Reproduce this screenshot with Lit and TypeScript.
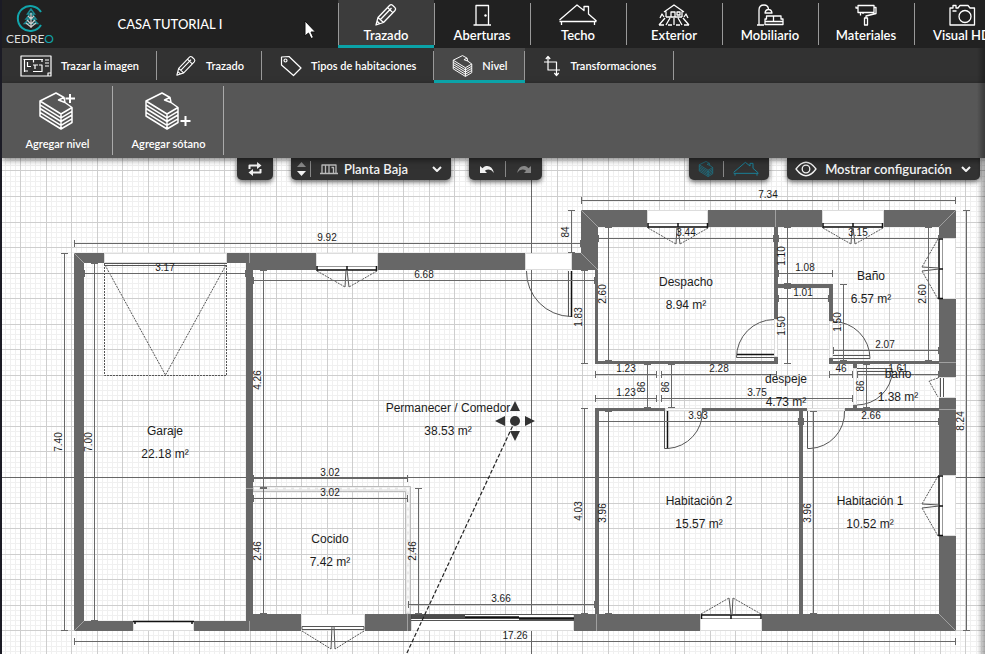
import { LitElement, html, svg, css, type TemplateResult } from "lit";
import { customElement } from "lit/decorators.js";
import { classMap } from "lit/directives/class-map.js";

type Glyph = { w: number; h: number; body: TemplateResult };

const pencil = svg`<path d="M2 22 4 14.500 15.500 2.500Q17 1 18.500 2.200L21 4.600Q22.300 6 21 7.500L9.500 19.500ZM4 14.500 9.500 19.500M6.500 16.500 17.500 5M13.500 4.500 18.800 9.600M2 22 3.200 18.200 5.800 20.700Z"/>`;
const slabs = svg`<path d="M1 9 17 1 25 5.500 19.500 8 26 10.500 33 15.500 22 22ZM25 5.500 26 10.500M1 9V24L22 37 33 30.500V15.500M22 22V37M1 12.800 22 25.800 33 19.300M1 16.500 22 29.500 33 23M1 20.300 22 33.300 33 26.800"/>`;

const glyphs: Record<string, Glyph> = {
  pencil: { w: 24, h: 24, body: pencil },
  door: { w: 24, h: 24, body: svg`<path d="M6 22V2.500H18.500V22M3.500 22H21"/><circle class="solid" cx="15.500" cy="12.500" r="1.200"/>` },
  house: { w: 40, h: 24, body: svg`<path d="M3.500 22V18.500M36.500 22V18.500M1.500 17 19 2 26 7.500V3.500H30.500V11L38.500 18M1.500 18.500H38.500"/>` },
  garden: {
    w: 32, h: 24,
    body: svg`<path d="M6 9 16 2 26 9M8 8.500V14M24 8.500V14M8 14H24M13 14V9H17V14M19 9H22V12H19ZM1 22 7 15M8 22 12 15M16 22V15M24 22 20 15M31 22 25 15M1 22H6M10 22H14M18 22H22M26 22H31M2 15 4 11 6 14M30 15 28 11 26 14"/>`,
  },
  sofa: {
    w: 28, h: 24,
    body: svg`<path d="M1 22H8M3 22V7Q3 2 8 2 12 2 12.500 6M9 10Q9.500 6.500 12.500 6.500 15.500 6.500 16 10ZM9 21.500V16H10.500V13H25V16H27V21.500ZM9 18.500H27M17.500 13V18.500"/>`,
  },
  roller: {
    w: 24, h: 24,
    body: svg`<path d="M4 2.500H20V9.500H4ZM4 5H2V3.500M20 4.500H22V10.500L12 13V15M10.500 15H13.500V22H10.500ZM6.500 9.500V12.500M9 9.500V11"/>`,
  },
  camera: {
    w: 28, h: 24,
    body: svg`<path d="M2 5H5V2.500H8V5H10L12 2.500H20L22 5H26.500V22H2ZM4.500 8H8.500"/><circle cx="17" cy="13.500" r="6"/>`,
  },
  blueprint: {
    w: 32, h: 22,
    body: svg`<path d="M1 1H31V21H1ZM3.500 4.500H23M4.500 4.500V17M4.500 16H8M7.500 7V11.500H11M13.500 7.500V4.500M13 10H18M15 10V14M13 16.500H22V10H19M22 4.500V7M25 5H29M25 8H29M25 11H29M28 21V18H31"/>`,
  },
  tag: { w: 22, h: 22, body: svg`<path d="M1.500 2 9 1.500 21 13 13.500 20.500 1.500 10Z"/><circle cx="5.500" cy="5.500" r="1.500"/>` },
  slabs: { w: 34, h: 38, body: slabs },
  transform: {
    w: 18, h: 22,
    body: svg`<path d="M5 2V15H17M1 7H13.500V20M2.800 4 5 1.500 7.200 4M11.300 18 13.500 20.500 15.700 18"/>`,
  },
  slabUp: { w: 40, h: 40, body: svg`<g transform="translate(1 1)">${slabs}</g><path class="plus" d="M32 3V12M27.500 7.500H37"/>` },
  slabDown: { w: 50, h: 40, body: svg`<g transform="translate(1 1)">${slabs}</g><path class="plus" d="M41.500 25V35M36.500 30H46.500"/>` },
  swap: {
    w: 14, h: 14,
    body: svg`<path class="heavy" d="M1.500 7V3.500H10M12.500 7V10.500H4"/><path class="solid" d="M9 0 13.500 3.500 9 7ZM5 7 .5 10.500 5 14Z"/>`,
  },
  plan: { w: 18, h: 12, body: svg`<path d="M2 10V2H16V10M0 10.500H18M5.500 2V10M9 2V10M11.500 4.500H13.500V10"/>` },
  chevron: { w: 12, h: 8, body: svg`<path class="heavy" d="M2 2 6 6 10 2"/>` },
  undo: { w: 16, h: 12, body: svg`<path class="solid" d="M1 3V10H8L5.800 7.800Q11 4.500 15 10 13 2 7 3 5 3.500 3.500 5.200Z"/>` },
  redo: { w: 16, h: 12, body: svg`<path class="solid" d="M15 3V10H8L10.200 7.800Q5 4.500 1 10 3 2 9 3 11 3.500 12.500 5.200Z"/>` },
  eye: { w: 22, h: 16, body: svg`<path d="M1 8Q11-5.500 21 8 11 21.500 1 8Z"/><circle cx="11" cy="8" r="3.800"/>` },
};

const icon = (name: string, w = glyphs[name].w, h = glyphs[name].h) => html`<svg
  class="icon" width=${w} height=${h} viewBox="0 0 ${glyphs[name].w} ${glyphs[name].h}" aria-hidden="true">${glyphs[name].body}</svg>`;

const sharedStyles = css`
  :host { display: block; font-family: Lato, "Open Sans", sans-serif; color: #fff; }
  * { box-sizing: border-box; }
  button { font: inherit; color: inherit; background: none; border: 0; padding: 0; margin: 0; cursor: pointer; }
  svg { display: block; flex: none; }
  .icon { fill: none; stroke: currentColor; stroke-width: 1.300; stroke-linejoin: round; }
  .heavy { stroke-width: 2; }
  .plus { stroke-width: 2; }
  .solid { fill: currentColor; stroke: none; }
`;

@customElement("main-header")
class MainHeader extends LitElement {
  static styles = [
    sharedStyles,
    css`
      header { display: flex; height: 48px; background: #212121; overflow: hidden; }
      .brand { flex: 0 0 336px; display: grid; grid-template-columns: 56px 1fr 56px; align-items: center; }
      .logo { width: 56px; height: 48px; }
      .ring { fill: none; stroke: #12a5ab; stroke-width: 2; }
      .leaf { fill: none; stroke: #1c8a93; stroke-width: 1.500; }
      .trunk { fill: none; stroke: #ccc; stroke-width: 1.200; }
      .name { fill: #ddd; font: 12px Lato, sans-serif; }
      .accent { fill: #12a5ab; }
      h1 { margin: 0; font-size: 13px; font-weight: 500; text-align: center; }
      nav { display: flex; }
      .tab {
        position: relative; flex: 0 0 96px; height: 48px; padding-top: 3px;
        display: flex; flex-direction: column; align-items: center;
        font-size: 13px; line-height: 16px; font-weight: 600; white-space: nowrap;
      }
      .tab::before { content: ""; position: absolute; left: 0; top: 3px; bottom: 3px; width: 1px; background: #999; }
      .active { background: #3c3c3c; border-bottom: 3px solid #0ba3a8; }
      .active::before { bottom: 0; }
    `,
  ];
  tabs: [string, string][] = [
    ["Trazado", "pencil"], ["Aberturas", "door"], ["Techo", "house"], ["Exterior", "garden"],
    ["Mobiliario", "sofa"], ["Materiales", "roller"], ["Visual HD", "camera"],
  ];
  render() {
    return html`<header>
      <div class="brand">
        <svg class="logo" viewBox="2 0 56 48" role="img" aria-label="Cedreo">
          <path class="ring" d="M41 12A12.500 12.500 0 1 0 41 25"/>
          <path class="leaf" d="M31 9 27.500 14H34.500ZM31 13 26 19H36ZM31 17 24.500 23.500H37.500Z"/>
          <path class="trunk" d="M31 13V28M31 19 28 16M31 19 34 16M31 24 27 20M31 24 35 20M31 27 26 23M31 27 36 23"/>
          <text class="name" x="6" y="43">CEDRE<tspan class="accent">O</tspan></text>
        </svg>
        <h1>CASA TUTORIAL I</h1>
      </div>
      <nav>
        ${this.tabs.map(([label, name], i) => html`<button class=${classMap({ tab: true, active: i === 0 })}>${icon(name)}<span>${label}</span></button>`)}
      </nav>
    </header>`;
  }
}

@customElement("tool-ribbon")
class ToolRibbon extends LitElement {
  static styles = [
    sharedStyles,
    css`
      .sub { display: flex; height: 35px; background: #323232; }
      .item {
        position: relative; display: flex; align-items: center; gap: 9px; padding: 0 18px;
        height: 35px; font-size: 11px; font-weight: 600; white-space: nowrap;
      }
      .item::after { content: ""; position: absolute; right: 0; top: 3px; bottom: 3px; width: 1px; background: #999; }
      .item .icon { stroke-width: 1.200; }
      .active { background: #484848; border-bottom: 3px solid #0ba3a8; padding-top: 3px; }
      .active::after { bottom: 0; }
      .active .icon { stroke-width: 1.700; }
      .panel { display: flex; height: 75px; background: #575757; box-shadow: 0 2px 6px rgba(0, 0, 0, .5); }
      .action {
        position: relative; width: 111px; height: 75px; padding-top: 8px;
        display: flex; flex-direction: column; align-items: center; gap: 5px;
        font-size: 11px; line-height: 16px; font-weight: 600;
      }
      .action .icon { stroke-width: 1.500; }
      .action::after { content: ""; position: absolute; right: 0; top: 3px; bottom: 3px; width: 1px; background: #aaa; }
    `,
  ];
  items: [string, string, number, number][] = [
    ["Trazar la imagen", "blueprint", 32, 22], ["Trazado", "pencil", 22, 22],
    ["Tipos de habitaciones", "tag", 22, 22], ["Nivel", "slabs", 21, 22], ["Transformaciones", "transform", 18, 22],
  ];
  render() {
    return html`<div class="sub">
        ${this.items.map(([label, name, w, h]) => html`<button class=${classMap({ item: true, active: label === "Nivel" })}>
          ${icon(name, w, h)}<span>${label}</span></button>`)}
      </div>
      <div class="panel">
        <button class="action">${icon("slabUp")}<span>Agregar nivel</span></button>
        <button class="action">${icon("slabDown")}<span>Agregar sótano</span></button>
      </div>`;
  }
}

@customElement("canvas-bar")
class CanvasBar extends LitElement {
  static styles = [
    sharedStyles,
    css`
      .bar { display: flex; justify-content: space-between; padding: 0 5px 0 235px; }
      .group { display: flex; gap: 18px; }
      .pill {
        display: flex; align-items: center; height: 22px; background: #323232; color: #f2f2f2;
        border-radius: 0 0 5px 5px; box-shadow: 0 2px 5px rgba(0, 0, 0, .6);
        font-size: 13px; font-weight: 600; white-space: nowrap;
      }
      .swap { width: 36px; justify-content: center; }
      .sep { width: 1px; height: 16px; background: #888; }
      .level { width: 160px; padding: 0 8px 0 6px; gap: 4px; }
      .level .plan { padding: 0 2px 0 5px; color: #bbb; }
      .stepper { display: flex; flex-direction: column; gap: 4px; }
      .stepper button { display: block; }
      .dim { color: #888; }
      .pick { position: relative; flex: 1; display: flex; align-items: center; }
      select {
        appearance: none; width: 100%; border: 0; padding: 0; margin: 0; background: none;
        color: inherit; font: inherit; line-height: 20px;
      }
      .pick .icon { margin-left: -12px; pointer-events: none; }
      .history { width: 73px; justify-content: space-evenly; }
      .views { width: 80px; justify-content: space-evenly; color: #1a7f96; }
      .config { width: 193px; padding: 0 8px; justify-content: space-between; }
      .views .icon { stroke-width: 1.500; }
    `,
  ];
  render() {
    return html`<div class="bar">
      <div class="group">
        <button class="pill swap" aria-label="Cambiar vista">${icon("swap")}</button>
        <div class="pill level">
          <div class="stepper">
            <button class="dim" aria-label="Subir nivel"><svg width="9" height="5"><path class="solid" d="M0 5 4.500 0 9 5Z"/></svg></button>
            <button aria-label="Bajar nivel"><svg width="9" height="5"><path class="solid" d="M0 0 4.500 5 9 0Z"/></svg></button>
          </div>
          <span class="sep"></span>
          <span class="plan">${icon("plan")}</span>
          <label class="pick"><select aria-label="Nivel"><option>Planta Baja</option></select>${icon("chevron")}</label>
        </div>
        <div class="pill history">
          <button aria-label="Deshacer">${icon("undo")}</button><span class="sep"></span>
          <button class="dim" aria-label="Rehacer">${icon("redo")}</button>
        </div>
      </div>
      <div class="group">
        <div class="pill views">
          <button aria-label="Niveles">${icon("slabs", 16, 16)}</button><span class="sep"></span>
          <button aria-label="Techo">${icon("house", 28, 16)}</button>
        </div>
        <button class="pill config">${icon("eye")}<span>Mostrar configuración</span>${icon("chevron")}</button>
      </div>
    </div>`;
  }
}

/* Plan geometry, in canvas units. */
type Box = [number, number, number, number];
const walls: Box[] = [
  [74, 253, 10, 378], [74, 253, 30, 10], [227, 253, 23, 10], [246, 263, 7, 358],
  [249, 253, 67, 17], [378, 253, 147, 17], [572, 253, 26, 17], [581, 210, 17, 60],
  [581, 210, 66, 17], [708, 210, 114, 17], [884, 210, 72, 17],
  [939, 210, 17, 28], [939, 299, 17, 78], [939, 398, 17, 77], [939, 536, 17, 95],
  [74, 621, 59, 10], [194, 621, 56, 10], [246, 614, 55, 17], [365, 614, 46, 17],
  [574, 614, 126, 17], [762, 614, 194, 17],
  [595, 270, 3, 94], [595, 361, 182, 3], [774, 227, 4, 92], [774, 357, 4, 7],
  [774, 284, 58, 4], [829, 284, 4, 37], [829, 358, 4, 6], [829, 361, 110, 3],
  [853, 364, 4, 4], [853, 405, 4, 6], [595, 408, 70, 3], [702, 408, 105, 3], [845, 408, 94, 3],
  [595, 408, 4, 206], [799, 411, 4, 203],
];
const openings: Box[] = [
  [104, 253, 123, 10], [316, 253, 62, 17], [525, 253, 47, 17], [647, 210, 61, 17], [822, 210, 62, 17],
  [939, 238, 17, 61], [939, 377, 17, 21], [939, 475, 17, 61], [133, 621, 61, 10],
  [301, 614, 64, 17], [411, 614, 163, 17], [700, 614, 62, 17],
  [774, 319, 4, 38], [829, 321, 4, 37], [665, 408, 37, 3], [807, 408, 38, 3], [853, 368, 4, 37],
];

/* start, end, fixed coordinate, label, label centre */
type Dim = [number, number, number, string, number];
const across: Dim[] = [
  [74, 581, 243, "9.92", 327], [581, 956, 200, "7.34", 768], [74, 956, 641, "17.26", 515],
  [84, 246, 273, "3.17", 165], [253, 595, 280, "6.68", 424], [253, 408, 478, "3.02", 330],
  [253, 408, 498, "3.02", 330], [408, 595, 604, "3.66", 501], [598, 774, 238, "3.44", 686],
  [778, 939, 238, "3.15", 858], [778, 833, 273, "1.08", 805], [778, 829, 298, "1.01", 803],
  [833, 939, 350, "2.07", 885], [595, 657, 374, "1.23", 626], [661, 777, 374, "2.28", 719],
  [829, 853, 374, "46", 841], [857, 939, 374, "1.61", 898], [595, 657, 398, "1.23", 626],
  [661, 853, 398, "3.75", 757], [598, 799, 421, "3.93", 698], [803, 939, 421, "2.66", 871],
];
const upright: Dim[] = [
  [253, 631, 64, "7.40", 442], [263, 621, 94, "7.00", 442], [270, 488, 263, "4.26", 380],
  [488, 614, 263, "2.46", 551], [210, 253, 571, "84", 232], [270, 364, 584, "1.83", 317],
  [408, 614, 584, "4.03", 511], [488, 614, 418, "2.46", 551], [227, 361, 608, "2.60", 294],
  [227, 284, 787, "1.10", 256], [288, 364, 787, "1.50", 326], [284, 361, 843, "1.50", 322],
  [227, 361, 928, "2.60", 294], [364, 408, 647, "86", 387], [364, 408, 671, "86", 387],
  [364, 408, 866, "86", 386], [411, 614, 608, "3.96", 513], [411, 614, 813, "3.96", 513],
  [210, 631, 966, "8.24", 421],
];
const rooms: [string, string, number, number][] = [
  ["Garaje", "22.18 m²", 165, 435], ["Permanecer / Comedor", "38.53 m²", 448, 412],
  ["Cocido", "7.42 m²", 330, 543], ["Despacho", "8.94 m²", 686, 286], ["Baño", "6.57 m²", 871, 280],
  ["despeje", "4.73 m²", 786, 383], ["baño", "1.38 m²", 898, 378],
  ["Habitación 2", "15.57 m²", 699, 505], ["Habitación 1", "10.52 m²", 870, 505],
];
/* hinge line start x, y, rotation */
const casements: [number, number, number][] = [
  [316, 270, 0], [647, 227, 0], [822, 227, 0], [939, 238, 90], [939, 475, 90], [762, 615, 180],
];

const CELL = 25.55;
const gridPath = (step: number, skip: number) => {
  let d = "";
  for (let i = -120; i < 600; i++) {
    if (skip && i % skip === 0) continue;
    const x = Math.round(531 + i * step) + 0.5;
    const y = Math.round(477 + i * step) + 0.5;
    if (x > 0) d += `M${x} 0V3000`;
    if (y > 0) d += `M0 ${y}H4000`;
  }
  return d;
};
const minor = gridPath(CELL / 5, 5);
const major = gridPath(CELL, 0);

@customElement("floor-plan")
class FloorPlan extends LitElement {
  static styles = css`
    :host { display: flex; background: #fff; }
    svg { flex: 1; width: 100%; display: block; overflow: hidden; }
    path, circle { fill: none; }
    .minor { stroke: #f0f0f0; }
    .major { stroke: #cecece; }
    .axis { stroke: #666; }
    .wall { fill: #676767; }
    .gap { fill: #fff; stroke: #ddd; }
    .mitre { stroke: #a0a0a0; }
    .soft { stroke: #bbb; fill: #e8e8e8; }
    .dash { stroke: #fff; stroke-dasharray: 5 3; stroke-width: 1.500; }
    .dim { stroke: #686868; }
    .thin { stroke: #555; }
    .faint { stroke: #999; }
    .black { stroke: #111; stroke-width: 1.500; }
    .dots { stroke: #555; stroke-dasharray: 2 1; }
    .guide { stroke: #222; stroke-dasharray: 4 2; stroke-width: 1.200; }
    .knob { fill: #333; }
    text { font-family: "Liberation Sans", Arial, sans-serif; text-anchor: middle; fill: #1c1c1c; }
    .measure { font-size: 10px; }
    .room { font-size: 12px; }
  `;
  render() {
    return html`<svg role="img" aria-label="Plano de la planta baja"><g transform="translate(-2 -158)">
      <path class="minor" d=${minor}/><path class="major" d=${major}/>
      <path class="axis" d="M531.500 0V3000M0 477.500H4000"/>
      <path class="soft" d="M253 486.500H410.500V614H405.500V491.500H253Z"/>
      <path class="dash" d="M246 488.500H408V614"/>
      ${walls.map(([x, y, w, h]) => svg`<rect class="wall" x=${x} y=${y} width=${w} height=${h}/>`)}
      ${openings.map(([x, y, w, h]) => svg`<rect class="gap" x=${x + 0.5} y=${y + 0.5} width=${w - 1} height=${h - 1}/>`)}
      <path class="mitre" d="M74 253 84 263M74 631 84 621M249.500 253V263M249.500 621V631M581 210 598 227M581 253 598 270M775.500 210V227M956 210 939 227M939 362.500H956M939 409.500H956M939 614 956 631M596.500 614V631M407.500 614V631M246 488.500H253"/>

      <path class="dots" d="M104.500 264V375.500H226.500V264M105 265 165.500 375 226 265"/>
      <path class="thin" d="M104 263.500H227M104 265.500H227"/>
      ${casements.map(([x, y, r]) => svg`<g transform="translate(${x} ${y}) rotate(${r})">
          <path class="faint" d="M1-3.500H60"/>
          <path class="black" d="M1 0H61M1-4V1M31-4V0M60.500-4V1"/>
          <path class="dots" d="M1 1 29 17M61 1 33 17"/>
          <path class="thin" d="M30 0 29 17M31 0 33 17"/>
        </g>`)}
      <path class="black" d="M133 621.500H194M135 621V624M192 621V624"/>
      <path class="thin" d="M302 626.500H364V629.500H302Z"/>
      <path class="dots" d="M302 631 331 649M364 631 335 649"/>
      <path class="thin" d="M332 626 331 649M334 626 335 649"/>
      <path class="thin" d="M411 614.500H574M411 620.500H574"/>
      <path class="black" d="M411 616H465M411 618H574M465 617H519M519 619H574"/>
      <path class="thin" d="M940.500 378V397M943.500 378V397"/>
      <path class="dots" d="M938 378 929 381 938 397"/>

      <path class="thin" d="M526.500 271A45 45 0 0 0 571 316.500M568.500 271V316.500"/>
      <path class="black" d="M571.500 271V317"/>
      <path class="thin" d="M774 319.500A38 38 0 0 0 736.500 357.500H774"/>
      <path class="black" d="M737 354.500H774"/>
      <path class="thin" d="M833 321.500A37 37 0 0 1 870 358.500H833M833 355.500H870"/>
      <path class="thin" d="M664.500 411V448.500H668A37 37 0 0 0 702.500 411"/>
      <path class="black" d="M667.500 411V448"/>
      <path class="thin" d="M807.500 411V448.500H810A36 36 0 0 0 844.500 411"/>
      <path class="thin" d="M857 368.500H892V371.500H857M892.500 371A36 36 0 0 1 857 405"/>

      <path class="dim" d=${across.map(([a, b, y]) => `M${a} ${y + 0.5}H${b}M${a + 0.5} ${y - 3}v7M${b - 0.5} ${y - 3}v7`).join("")}/>
      <path class="dim" d=${upright.map(([a, b, x]) => `M${x + 0.5} ${a}V${b}M${x - 3} ${a + 0.5}h7M${x - 3} ${b - 0.5}h7`).join("")}/>
      ${across.map(([, , y, label, c]) => svg`<text class="measure" x=${c} y=${y - 2}>${label}</text>`)}
      ${upright.map(([, , x, label, c]) => svg`<text class="measure" transform="translate(${x - 2} ${c}) rotate(-90)">${label}</text>`)}
      ${rooms.map(([name, area, x, y]) => svg`<text class="room" x=${x} y=${y}>${name}</text><text class="room" x=${x} y=${y + 23}>${area}</text>`)}

      <path class="guide" d="M515 421 406 655"/>
      <circle class="knob" cx="515" cy="421" r="5"/>
      <path class="knob" d="M515 401 520 411H510ZM515 441 520 431H510ZM495 421 505 416V426ZM535 421 525 416V426Z"/>
    </g></svg>`;
  }
}

@customElement("app-root")
class AppRoot extends LitElement {
  static styles = css`
    :host {
      display: flex; flex-direction: column; position: relative; box-sizing: border-box;
      min-height: 100vh; border-left: 2px solid #1b1b25; overflow: hidden; background: #fff;
    }
    tool-ribbon { position: relative; z-index: 2; }
    .stage { position: relative; flex: 1; display: flex; }
    floor-plan { flex: 1; min-width: 0; }
    canvas-bar { position: absolute; inset: 0 0 auto 0; }
    .edge {
      position: absolute; z-index: 3; top: 48px; right: 0; bottom: 0; width: 8px; pointer-events: none;
      background: linear-gradient(to right, transparent, rgba(0, 0, 0, .35));
    }
    .pointer { position: absolute; z-index: 4; left: 302px; top: 20px; }
  `;
  render() {
    return html`<main-header></main-header>
      <tool-ribbon></tool-ribbon>
      <div class="stage"><floor-plan></floor-plan><canvas-bar></canvas-bar></div>
      <div class="edge"></div>
      <svg class="pointer" width="12" height="20" aria-hidden="true">
        <path d="M1 1V16L4.500 13 7 18.500 9.500 17.500 7 12H11.500Z" fill="#fff" stroke="#111" stroke-width="1"/>
      </svg>`;
  }
}
